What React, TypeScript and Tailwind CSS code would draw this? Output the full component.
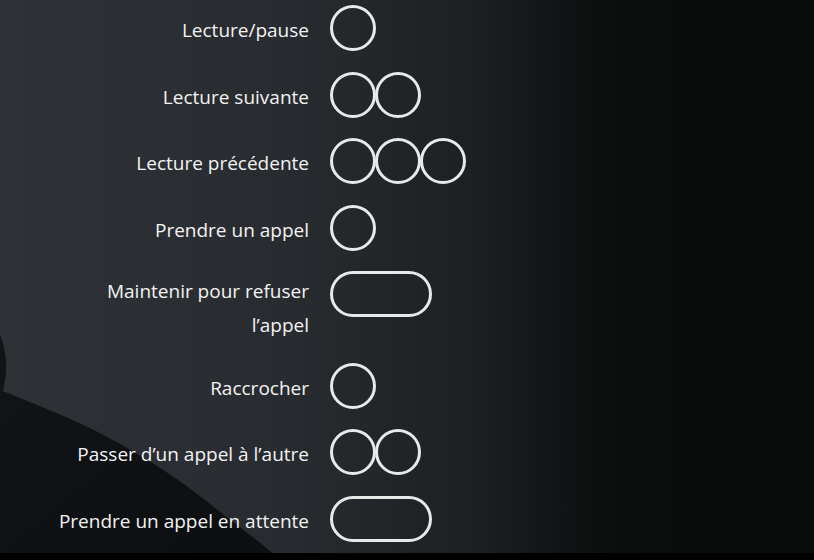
import React from 'react'

type Shape = 'circle' | 'pill'

const rows: { label: string[]; shape: Shape; count: number; pt: string }[] = [
  { label: ['Lecture/pause'], shape: 'circle', count: 1, pt: 'pt-[8px]' },
  { label: ['Lecture suivante'], shape: 'circle', count: 2, pt: 'pt-[8px]' },
  { label: ['Lecture précédente'], shape: 'circle', count: 3, pt: 'pt-[8px]' },
  { label: ['Prendre un appel'], shape: 'circle', count: 1, pt: 'pt-[8px]' },
  { label: ['Maintenir pour refuser', 'l’appel'], shape: 'pill', count: 1, pt: 'pt-[3px]' },
  { label: ['Raccrocher'], shape: 'circle', count: 1, pt: 'pt-[8px]' },
  { label: ['Passer d’un appel à l’autre'], shape: 'circle', count: 2, pt: 'pt-[8px]' },
  { label: ['Prendre un appel en attente'], shape: 'pill', count: 1, pt: 'pt-[8px]' },
]

function Silhouette() {
  return (
    <svg className="absolute left-0 top-0" width="814" height="560" viewBox="0 0 814 560">
      <defs>
        <linearGradient id="sil" x1="0" y1="0" x2="1" y2="1">
          <stop offset="0" stopColor="#121518" />
          <stop offset="1" stopColor="#0c0e10" />
        </linearGradient>
      </defs>
      <path
        d="M0 334 C4 344 7 358 6 372 C5 382 4 387 3 391 C30 402 60 414 90 428 C130 448 170 472 205 500 C230 520 255 538 276 556 L0 556 Z"
        fill="url(#sil)"
      />
    </svg>
  )
}

function Shapes({ shape, count }: { shape: Shape; count: number }) {
  if (shape === 'pill') {
    return <div className="w-[102px] h-[46px] rounded-full border-[3px] border-[#e9e9e9]" />
  }
  return (
    <div className="flex">
      {Array.from({ length: count }).map((_, i) => (
        <div
          key={i}
          className={`w-[46px] h-[46px] rounded-full border-[3px] border-[#e9e9e9] ${i > 0 ? '-ml-px' : ''}`}
        />
      ))}
    </div>
  )
}

export default function App() {
  return (
    <div
      className="relative w-[814px] h-[560px] overflow-hidden bg-[linear-gradient(90deg,#2e3237_0%,#282b2f_35%,#1d2023_58%,#101213_70%,#0b0c0c_78%,#0a0b0b_100%)]"
      style={{ fontFamily: '"Open Sans", "Noto Sans", sans-serif' }}
    >
      <Silhouette />
      <div className="relative flex flex-col gap-[20.5px] pt-[5px]">
        {rows.map((r, i) => (
          <div key={i} className="flex items-start">
            <div className={`w-[309px] text-right text-[19px] leading-[34px] text-[#f3f3f3] ${r.pt}`}>
              {r.label.map((l, j) => (
                <div key={j}>{l}</div>
              ))}
            </div>
            <div className="ml-[21px]">
              <Shapes shape={r.shape} count={r.count} />
            </div>
          </div>
        ))}
      </div>
      <div className="absolute left-0 bottom-0 w-full h-[7px] bg-black" />
    </div>
  )
}
